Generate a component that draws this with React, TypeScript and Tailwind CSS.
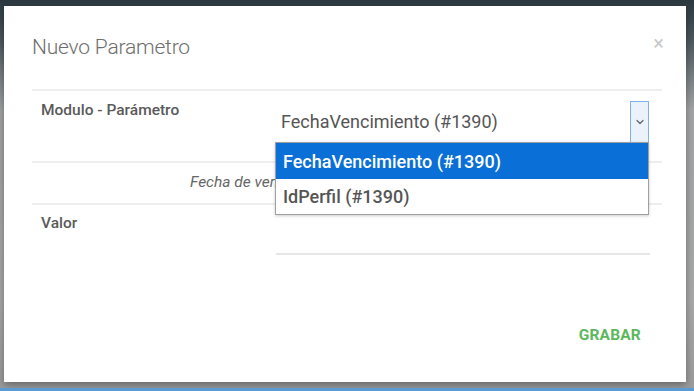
import { ChevronDown } from "lucide-react";

export default function App() {
  return (
    <div className="relative w-[694px] h-[391px] overflow-hidden bg-[linear-gradient(180deg,#2c3941_0px,#4c575e_40px,#a3a5a6_110px,#a9a9a9_300px,#9c9c9c_385px)] pl-[4px] pt-[6px] font-['Roboto',sans-serif]">
      {/* modal */}
      <div className="relative w-[682px] h-[376px] bg-white shadow-[0_3px_8px_rgba(0,0,0,0.35)] pl-[28px] pr-[24px] pt-[29px] flex flex-col">
        <div className="flex items-center justify-between h-[26px]">
          <h4 className="text-[21px] font-light text-[#6e6e6e] tracking-[-0.2px]">Nuevo Parametro</h4>
          <span className="text-[20px] leading-none text-[#c8c8c8] mr-[-2px] mt-[-10px]">×</span>
        </div>

        <div className="mt-[28px] border-t-2 border-[#eeeeee]">
          {/* row 1 */}
          <div className="relative flex h-[70px]">
            <div className="w-[244px] pl-[9px] pt-[8px] text-[15.5px] font-medium text-[#5a5a5a]">Modulo - Parámetro</div>
            <div className="w-[374px] flex items-start pt-[10px]">
              <div className="flex-1 pl-[5px] pt-[10px] text-[18px] text-[#555] leading-[22px]">FechaVencimiento (#1390)</div>
              <div className="w-[19px] h-[42px] mr-[1px] border border-[#7fb3e8] bg-[#eaf2fb] flex items-center justify-center">
                <ChevronDown size={12} strokeWidth={2.5} className="text-[#666]" />
              </div>
            </div>
            {/* open dropdown */}
            <div className="absolute left-[243px] top-[51px] w-[374px] z-10 bg-white border border-[#a0a0a0] shadow-[0_1px_3px_rgba(0,0,0,0.2)]">
              <div className="h-[36px] bg-[#0a6fd6] text-white text-[18px] font-medium pl-[7px] flex items-center">FechaVencimiento (#1390)</div>
              <div className="h-[35px] text-[#555] text-[18px] font-medium pl-[7px] flex items-center">IdPerfil (#1390)</div>
            </div>
          </div>

          {/* row 2 */}
          <div className="h-[42px] border-t-2 border-[#eeeeee] flex items-center pl-[158px] text-[15.5px] italic text-[#666]">
            Fecha de vencimiento
          </div>

          {/* row 3 */}
          <div className="flex border-t-2 border-[#eeeeee] h-[52px]">
            <div className="w-[244px] pl-[9px] pt-[7px] text-[15.5px] font-medium text-[#5a5a5a]">Valor</div>
            <div className="w-[374px] border-b-2 border-[#e6e6e6]"></div>
          </div>
        </div>

        <div className="flex justify-end mt-[69px] pr-[21px]">
          <button className="text-[15.5px] font-bold text-[#5cb85c] tracking-[0.2px]">GRABAR</button>
        </div>
      </div>
      <div className="absolute left-0 bottom-0 w-full h-[3px] bg-[#5b9bd5]"></div>
    </div>
  );
}
